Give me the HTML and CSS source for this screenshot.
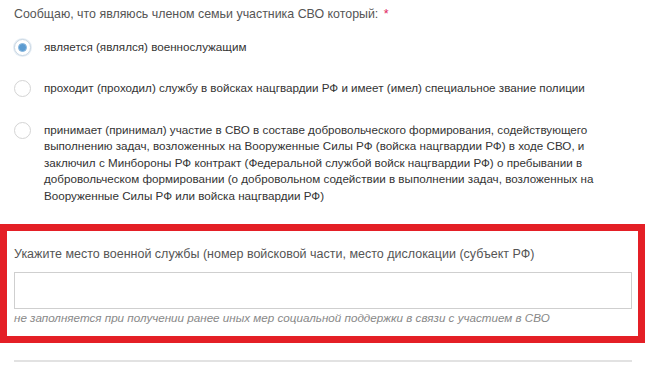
FILE: index.html
```html
<!DOCTYPE html>
<html lang="ru">
<head>
<meta charset="utf-8">
<link rel="stylesheet" href="styles.css">
</head>
<body>
<div class="page">
  <div class="question">Сообщаю, что являюсь членом семьи участника СВО который: <span class="req">*</span></div>
  <div class="options">
    <label class="option">
      <span class="radio checked"></span>
      <span class="opt-text">является (являлся) военнослужащим</span>
    </label>
    <label class="option">
      <span class="radio"></span>
      <span class="opt-text">проходит (проходил) службу в войсках нацгвардии РФ и имеет (имел) специальное звание полиции</span>
    </label>
    <label class="option">
      <span class="radio"></span>
      <span class="opt-text">принимает (принимал) участие в СВО в составе добровольческого формирования, содействующего выполнению задач, возложенных на Вооруженные Силы РФ (войска нацгвардии РФ) в ходе СВО, и заключил с Минбороны РФ контракт (Федеральной службой войск нацгвардии РФ) о пребывании в добровольческом формировании (о добровольном содействии в выполнении задач, возложенных на Вооруженные Силы РФ или войска нацгвардии РФ)</span>
    </label>
  </div>
</div>
<div class="highlight">
  <div class="field-label">Укажите место военной службы (номер войсковой части, место дислокации (субъект РФ)</div>
  <div class="input"></div>
  <div class="hint">не заполняется при получении ранее иных мер социальной поддержки в связи с участием в СВО</div>
</div>
<div class="page">
  <div class="divider"></div>
</div>
</body>
</html>
```
FILE: styles.css
```css
html, body {
  margin: 0;
  padding: 0;
  background: #fff;
}
body {
  width: 646px;
  font-family: "Liberation Sans", Arial, sans-serif;
  font-size: 12px;
  color: #333;
}
.page {
  padding: 0 14px;
}
.question {
  padding-top: 6px;
  line-height: 17px;
  font-size: 12.4px;
  color: #555;
}
.req {
  color: #e0245e;
  margin-left: 2px;
}
.options {
  display: flex;
  flex-direction: column;
  padding-top: 16px;
}
.option {
  display: flex;
  align-items: flex-start;
  gap: 13px;
  line-height: 16.4px;
  font-size: 11.65px;
}
.option + .option {
  margin-top: 24px;
}
.option:last-child {
  margin-top: 25px;
}
.radio {
  flex: none;
  width: 15px;
  height: 15px;
  border: 1px solid #d4d4d4;
  border-radius: 50%;
  background: #fff;
  box-sizing: content-box;
  position: relative;
}
.radio.checked {
  border-color: #c9d6e2;
  box-shadow: 0 0 0 1px #e6eef5;
}
.radio.checked::after {
  content: "";
  position: absolute;
  left: 3px;
  top: 3px;
  width: 7px;
  height: 7px;
  border-radius: 50%;
  background: #5b9bd1;
  border: 1px solid #8ab8de;
}
.opt-text {
  flex: 1;
}
.highlight {
  margin-top: 20px;
  margin-right: 1px;
  border: 7px solid #e41f26;
  padding: 15px 6px 10px 7px;
}
.field-label {
  color: #555;
  font-size: 12.5px;
  line-height: 17px;
}
.input {
  margin-top: 9px;
  height: 35px;
  border: 1px solid #cfcfcf;
  background: #fff;
}
.hint {
  color: #888;
  font-style: italic;
  font-size: 11.65px;
  line-height: 17px;
}
.divider {
  margin-top: 17px;
  height: 2px;
  background: #e2e2e2;
}
```
